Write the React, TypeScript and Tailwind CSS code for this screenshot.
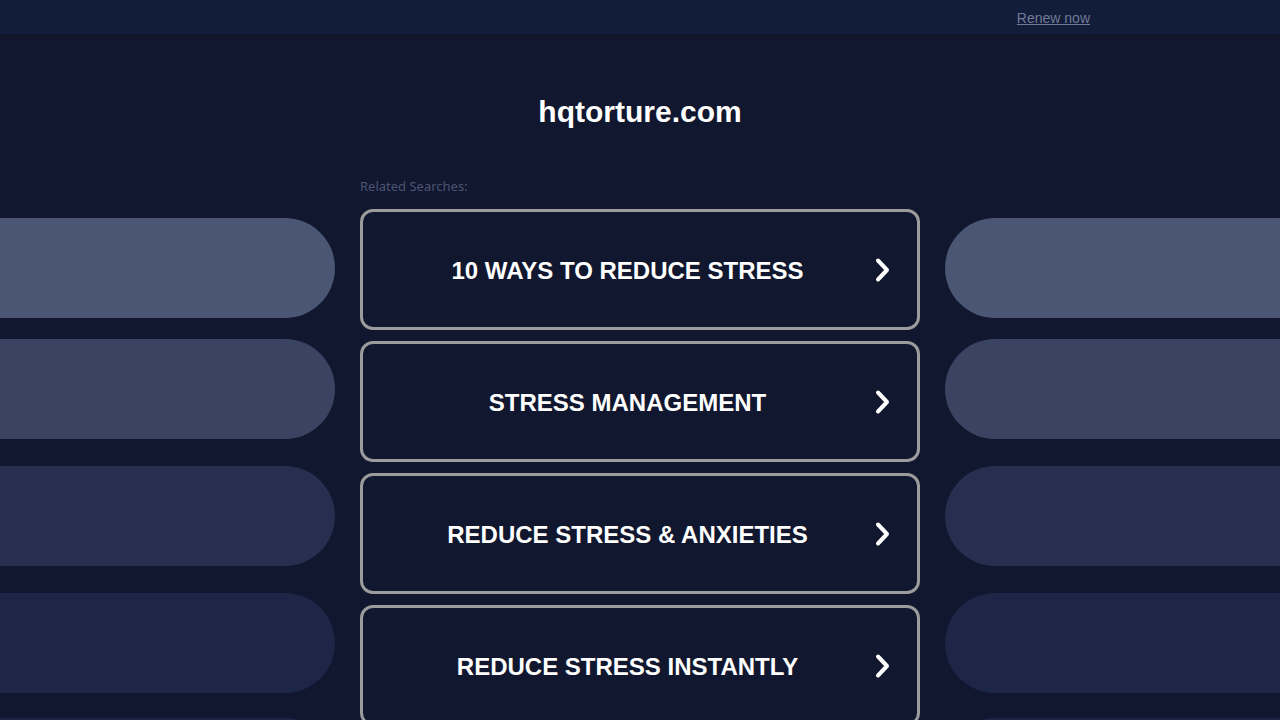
import React from 'react';

// Left/right decorative pills: top margin and colour per row
const PILLS = [
  { mt: 'mt-[41px]', bg: 'bg-[#4b5674]' },
  { mt: 'mt-[21px]', bg: 'bg-[#3a4462]' },
  { mt: 'mt-[27px]', bg: 'bg-[#262f4f]' },
  { mt: 'mt-[27px]', bg: 'bg-[#1d2647]' },
  { mt: 'mt-[25px]', bg: 'bg-[#1c2546]' },
];

const SEARCHES = [
  '10 WAYS TO REDUCE STRESS',
  'STRESS MANAGEMENT',
  'REDUCE STRESS & ANXIETIES',
  'REDUCE STRESS INSTANTLY',
];

function Chevron() {
  return (
    <svg width="16" height="26" viewBox="0 0 16 26" className="shrink-0">
      <path
        d="M4 3.5 L13 13 L4 22.5"
        fill="none"
        stroke="#ffffff"
        strokeWidth="4"
        strokeLinecap="round"
        strokeLinejoin="round"
      />
    </svg>
  );
}

function SidePills({ side }: { side: 'left' | 'right' }) {
  return (
    <div className={`w-[360px] shrink-0 flex flex-col ${side === 'left' ? 'pr-[25px]' : 'pl-[25px]'}`}>
      {PILLS.map((p, i) => (
        <div
          key={i}
          className={`h-[100px] ${p.mt} ${p.bg} ${side === 'left' ? 'rounded-r-[50px]' : 'rounded-l-[50px]'}`}
        />
      ))}
    </div>
  );
}

export default function App() {
  return (
    <div className="h-[720px] overflow-hidden bg-[#11172e] font-['Liberation_Sans',Arial,sans-serif]">
      {/* Top bar */}
      <header className="h-[34px] bg-[#111d3a] shadow-[0_2px_4px_rgba(0,0,0,0.15)] flex items-center justify-end pr-[190px]">
        <a href="#" className="mt-[2px] text-[14px] text-[#727a94] underline">
          Renew now
        </a>
      </header>

      {/* Domain title */}
      <h1 className="mt-[60px] h-[36px] leading-[36px] text-center text-[30px] font-bold text-white">
        hqtorture.com
      </h1>

      {/* Related searches */}
      <div className="mt-[47px] flex">
        <SidePills side="left" />

        <div className="w-[560px] shrink-0">
          <div className="h-[16px] pt-[1px] leading-[16px] text-[13px] text-[#4b5573] font-['Noto_Sans',sans-serif]">
            Related Searches:
          </div>
          <div className="mt-[16px] flex flex-col gap-[11px]">
            {SEARCHES.map((s) => (
              <a
                key={s}
                href="#"
                className="h-[121px] flex items-center border-[3px] border-[#9c9c9c] rounded-[13px] bg-[#11172e] pl-[18px] pr-[27px]"
              >
                <span className="flex-1 pt-[2px] text-center text-[24px] font-bold text-white">{s}</span>
                <Chevron />
              </a>
            ))}
          </div>
        </div>

        <SidePills side="right" />
      </div>
    </div>
  );
}
